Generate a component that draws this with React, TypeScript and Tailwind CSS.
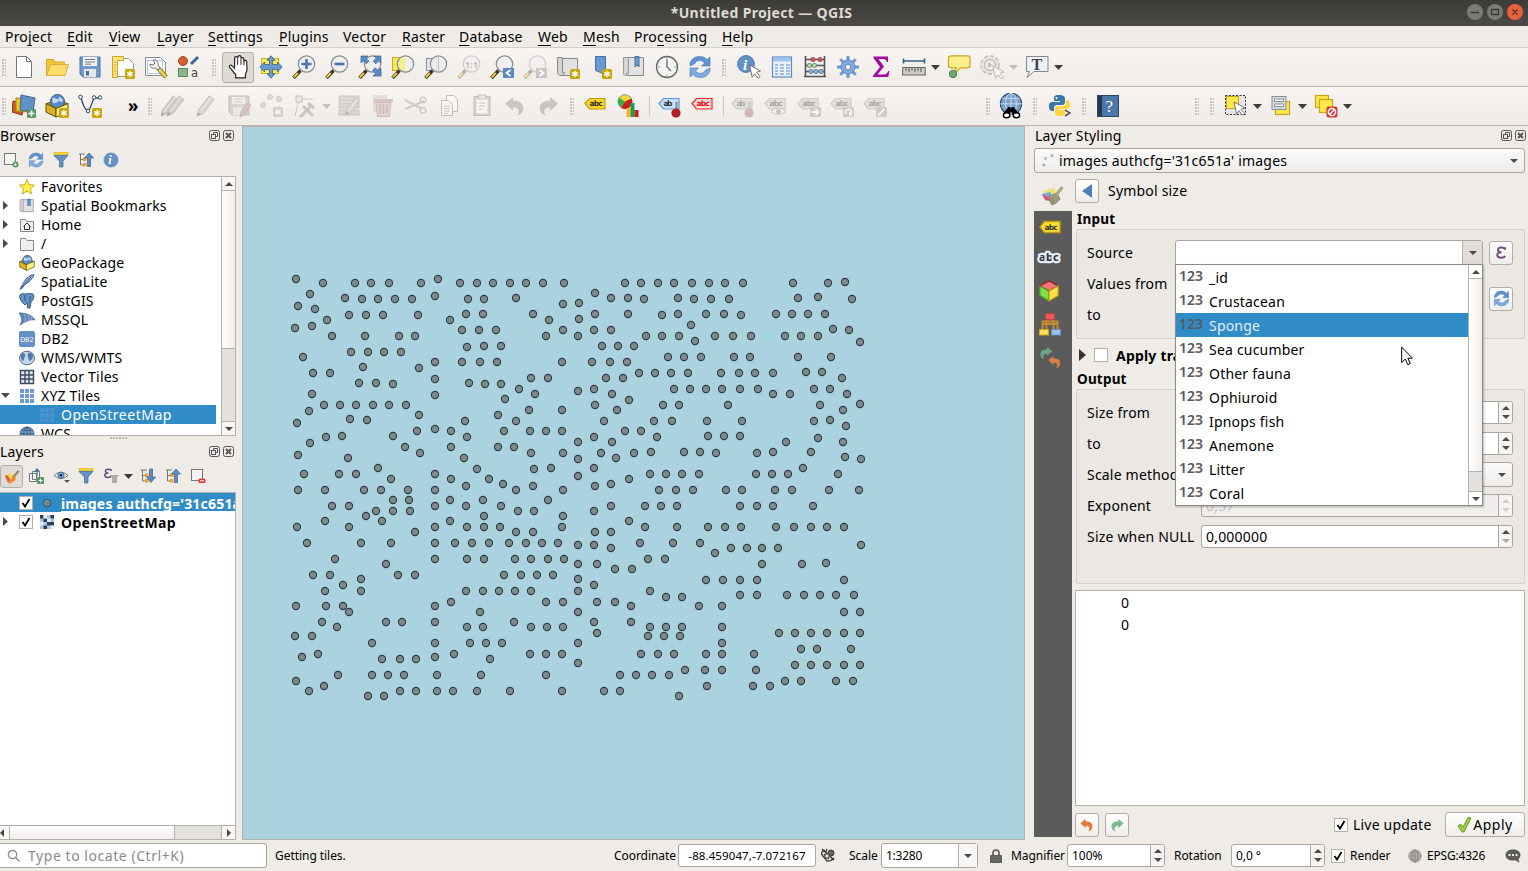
import React from "react";

/* ---------- map points: [y, ...x] ---------- */
const POINTS: number[][] = [
  [279, 296, 438], [283, 323, 355, 371, 389, 421, 460, 477, 493, 510, 526, 543, 564, 625, 641, 658, 674, 692, 709, 725, 743, 793, 828], [282, 845],
  [294, 310], [298, 345, 516, 611, 628, 678, 798], [299, 362, 378, 395, 412, 468, 484, 644, 694, 711, 729, 852], [296, 435], [304, 563], [303, 579], [293, 595], [297, 818],
  [306, 298], [309, 315], [320, 327, 450, 549], [315, 349, 366, 383, 418, 662, 741], [314, 466, 483, 533, 595, 628, 678, 706, 724, 776, 792, 808, 825], [319, 579],
  [325, 691], [328, 295], [326, 312], [336, 332, 365, 399, 415, 546, 578, 646, 662, 679, 715, 733, 751, 785, 801, 818], [330, 462, 479, 496, 563, 594, 611, 849], [329, 833],
  [341, 695], [342, 860], [347, 467], [346, 484, 501, 602, 618, 634], [357, 303, 668, 684, 701, 734, 750, 798, 831], [352, 351, 368, 384, 401], [367, 363], [368, 419],
  [362, 435, 462, 480, 497, 562, 592, 610, 627], [373, 313, 330, 639, 655, 671, 688, 721, 739, 755, 773], [372, 806, 822], [379, 435], [378, 531, 548, 606, 623, 842],
  [389, 519, 594, 674, 690, 706, 722, 740, 758, 814, 830], [383, 359, 376, 469], [384, 393, 485, 501], [391, 578], [394, 312, 535, 612, 773, 790, 847], [395, 435], [399, 505], [400, 629],
  [405, 324, 340, 356, 373, 389, 406, 595, 663, 679, 728, 820], [404, 860], [411, 309], [415, 419, 498], [410, 529, 562, 617, 843], [421, 465, 516, 604, 654, 672, 707, 742, 814],
  [420, 367, 830], [419, 350], [423, 297], [426, 846], [431, 417, 451, 504, 530, 546, 562, 625, 641], [429, 435], [437, 326, 467, 594, 657], [436, 342, 393, 708, 724, 740], [438, 818],
  [443, 310], [442, 578, 612, 786, 843], [447, 405, 451, 498, 514], [453, 420, 531, 563, 601, 634, 716, 757], [452, 651, 684, 700, 773, 811], [455, 298], [458, 348, 464, 616], [457, 845],
  [459, 578, 861], [469, 477, 534], [468, 378, 551, 594, 803], [474, 304, 339, 356, 435, 650, 666, 682, 699, 756, 772, 788, 838], [479, 391, 451, 489], [476, 578],
  [484, 503, 611], [479, 629], [490, 298, 325, 364, 381, 408, 516, 563, 659, 676, 693, 726, 829, 859], [486, 466, 533, 595],
  [490, 435, 742, 775, 792], [500, 393, 409, 450, 483, 548], [506, 332, 349, 435, 466, 501, 611, 645, 661, 677, 740, 757, 773, 813], [511, 376, 393, 410, 518, 534, 594], [516, 366, 484, 563],
  [527, 297, 349, 435, 467, 484, 500, 562, 645, 677, 708, 725, 741, 776, 794, 811, 827, 844], [521, 325, 382, 450, 629], [532, 415, 516, 533, 595, 611],
  [543, 307, 361, 391, 435, 455, 472, 489, 509, 526, 542, 558, 640], [545, 578, 594, 861], [548, 611, 731, 747, 762, 778], [553, 715], [543, 673, 700],
  [559, 335, 435, 467, 484, 515, 531, 548, 564, 648, 665], [564, 386, 578, 597, 762, 802], [563, 826], [569, 615, 632],
  [575, 313, 330, 398, 415, 504, 521, 537, 553], [579, 361, 578], [580, 706, 723, 740, 757, 844], [585, 343, 594], [591, 325, 466, 483, 499, 515, 531, 578, 650], [591, 361],
  [595, 787, 804, 820, 836, 854, 740, 757], [602, 451, 546, 563, 597, 615], [606, 296, 326, 343, 435, 631, 722], [612, 349, 480, 578, 844, 860], [597, 666, 682], [606, 699],
  [622, 322, 386, 402, 435, 514, 594, 631], [627, 337, 467, 483, 531, 547, 563, 650, 666, 682, 722], [636, 295, 312, 648, 664, 680], [633, 597, 779, 795, 811, 827, 844, 860],
  [643, 372, 435, 470, 486, 502, 578, 722], [649, 801, 817, 851], [654, 318, 454, 530, 546, 562, 641, 658, 674, 706, 722, 754], [657, 302, 435], [659, 382, 400, 416, 490], [663, 578],
  [665, 795, 811, 827, 844, 860], [670, 685, 705, 722, 756], [675, 338, 372, 388, 404, 437, 481, 546, 620, 636, 652, 669], [681, 296, 785, 801, 836, 853], [686, 324, 707, 753, 770],
  [691, 309, 400, 416, 437, 453, 477, 510, 562, 604, 620], [696, 368, 384, 679],
];

/* ---------- icons ---------- */
type Ico = { className?: string };
const S = ({ className = "h-6 w-6", vb = "0 0 24 24", children }: { className?: string; vb?: string; children: React.ReactNode }) => (
  <svg className={"shrink-0 " + className} viewBox={vb} fill="none">{children}</svg>
);
const Badge = ({ x = 14, y = 14, c = "#c8a60c" }) => (
  <g>
    <rect x={x} y={y} width="10" height="10" rx="1.5" fill={c} />
    <path d={`M${x + 5} ${y + 1.8}v6.4M${x + 2.2} ${y + 3.4}l5.6 3.2M${x + 7.8} ${y + 3.4}l-5.6 3.2`} stroke="#fff" strokeWidth="1.3" />
  </g>
);
const Cursor = ({ x = 12, y = 10 }) => (
  <path transform={`translate(${x} ${y})`} d="M0 0l11 6-4 1.2 3.6 4.4-2 1.6-3.6-4.5-2.3 3.5z" fill="#fff" stroke="#666" strokeWidth="0.9" />
);
const FileI = () => <S><path d="M4.500 1.500h10l5 5v16h-15z" fill="#fff" stroke="#777" /><path d="M14.500 1.500v5h5" stroke="#777" /></S>;
const FolderI = () => <S><path d="M1.500 20V4.500h7l2 2.500h9v4" fill="#f0c53a" stroke="#d8a832" /><path d="M1.500 20.500l4-11h18l-3.500 11z" fill="#fbdc6d" stroke="#dcae38" /></S>;
const SaveI = () => <S><path d="M2 2h20v20H5l-3-3z" fill="#6f9ad0" stroke="#4a6f9e" /><rect x="5" y="2" width="14" height="9" fill="#f4f4f4" /><path d="M7 4.500h10M7 7h10M7 9.200h6" stroke="#777" /><rect x="6" y="14" width="12" height="8" fill="#e5e8ea" /><rect x="8" y="16" width="3" height="4.500" fill="#4a6f9e" /></S>;
const LayoutI = () => <S><path d="M5.500 3.500h12l5 5v13h-17z" fill="#fff" stroke="#999" /><path d="M1.500 1.500h11v4h-6v17h-5z" fill="#fbe27d" stroke="#c9a51c" /><path d="M3 7h2M3 10h2M3 13h2M3 16h2M3 19h2" stroke="#c9a51c" /><Badge /></S>;
const LayoutMgrI = () => <S><path d="M1.500 2.500h15l5 5v13h-20z" fill="#fff" stroke="#888" /><rect x="3.500" y="5.500" width="15" height="13" stroke="#a8c8ee" /><path d="M14 13l8 9" stroke="#7d7223" strokeWidth="4.500" /><path d="M14 13l7.500 8.500" stroke="#f0cf54" strokeWidth="2.800" /><path d="M9 5l2 3-2 2-3-1c0 4 3 5 5 4l3 2 2-2-2-3c1-3-2-6-5-5z" fill="#eee" stroke="#666" strokeWidth=".9" /></S>;
const StyleMgrI = () => <S><circle cx="6" cy="6" r="4.500" fill="#d1622f" stroke="#a04a20" /><path d="M14 9l7-7" stroke="#3e689c" strokeWidth="3" /><rect x="1.500" y="13.500" width="9" height="8" fill="#8bb48b" stroke="#5b8a5b" /><text x="14" y="21.500" fontSize="11.500" fill="#444" fontFamily="DejaVu Sans">a</text></S>;
const HandI = () => <S className="h-[26px] w-[26px]"><path d="M8 22v-3L2.600 12.500c-1.300-1.800.8-3 2.200-1.500L7 13V4c0-2 2.500-2 2.700 0l.5-1.500c.6-1.600 2.600-1.200 2.700.3v1.300c.7-1.300 2.500-.8 2.700.6v1.600c.8-1 2.500-.4 2.600 1L18.500 15l-1.500 4v3z" fill="#fff" stroke="#222" strokeWidth="1.100" /><path d="M9.800 4.500V10M12.900 4.500V10M15.700 6.500V10.500" stroke="#222" strokeWidth=".9" /></S>;
const PanI = () => <S><rect x="2.500" y="3.500" width="17" height="15" fill="#fbe94f" stroke="#c8b52a" /><path d="M12 .8l4 4.500h-2.500v4.200h5V7l4.700 5-4.700 5v-2.500h-5v4.200H16l-4 4.500-4-4.500h2.500v-4.200h-5V17L.8 12l4.700-5v2.500h5V5.300H8z" fill="#6b9ad0" stroke="#39618f" strokeWidth=".8" /></S>;
const Glass = ({ children, dim }: { children?: React.ReactNode; dim?: boolean }) => (
  <g opacity={dim ? 0.35 : 1}>
    <path d="M8.500 15.500L1.500 23" stroke="#3a3420" strokeWidth="3.400" /><path d="M5.800 18L1.800 22.300" stroke="#f2cf3c" strokeWidth="1.900" />
    <circle cx="14.500" cy="9" r="8.200" fill="#eceeee" fillOpacity=".85" stroke="#8b8b8b" strokeWidth="1.200" />{children}
  </g>
);
const ZoomInI = () => <S><Glass><path d="M14.500 4v10M9.500 9h10" stroke="#4676b0" strokeWidth="2.600" /></Glass></S>;
const ZoomOutI = () => <S><Glass><path d="M9.500 9h10" stroke="#4676b0" strokeWidth="2.600" /></Glass></S>;
const ZoomFullI = () => <S><Glass /><path d="M3 8V1h7L7.800 3.200l3 3-2.600 2.600-3-3zM23 8V1h-7l2.200 2.200-3 3 2.600 2.600 3-3zM23 13v8h-8l2.500-2.500-3-3 2.700-2.700 3 3z" fill="#5b8bc4" stroke="#39618f" strokeWidth=".7" /></S>;
const ZoomSelI = () => <S><rect x="1.500" y="2.500" width="11" height="13" fill="#fbe94f" stroke="#c8a92a" /><Glass><path d="M14.500 2a7 7 0 0 0 0 14z" fill="#f7ec96" /></Glass></S>;
const ZoomLayerI = () => <S><rect x="2.500" y="3.500" width="10" height="12" fill="#e4e8ec" stroke="#8b9196" /><Glass><path d="M14.500 2v14" stroke="#bbb" /></Glass></S>;
const ZoomNativeI = () => <S><Glass dim><text x="8" y="12.500" fontSize="9" fontWeight="bold" fill="#555" fontFamily="Noto Sans">1:1</text></Glass></S>;
const ZoomLastI = () => <S><Glass /><rect x="13" y="13" width="11" height="10" fill="#5c88bd" /><path d="M20.500 15l-4 3 4 3" stroke="#fff" strokeWidth="1.800" /></S>;
const ZoomNextI = () => <S><Glass dim /><rect x="13" y="13" width="11" height="10" fill="#c9c7c5" /><path d="M16.500 15l4 3-4 3" stroke="#fff" strokeWidth="1.800" /></S>;
const MapViewI = () => <S><path d="M5.500 3.500h16v17h-16z" fill="#e2e2e2" stroke="#888" /><path d="M1.500 2.500h5v15h2c0 4-7 4-7 0z" fill="#d4d4d4" stroke="#888" /><Badge /></S>;
const BookmarkNewI = () => <S><path d="M6.500 1.500h10v20l-5-4-5-2z" fill="#6b9ad0" stroke="#466f9f" /><Badge x={13} /></S>;
const BookmarksI = ({ className }: Ico) => <S className={className}><path d="M4.500 2.500h17v18h-17z" fill="#e2e2e2" stroke="#888" /><path d="M1.500 2.500h5v16h-2c-1 3-3 2-3 0z" fill="#d4d4d4" stroke="#999" /><path d="M13 1.500h4V12l-2-2-2 2z" fill="#6b9ad0" stroke="#466f9f" /></S>;
const ClockI = () => <S><circle cx="12" cy="12" r="10.500" fill="#f3f4f4" stroke="#666" strokeWidth="1.300" /><path d="M12 5v7l4 4" stroke="#666" strokeWidth="1.300" /><path d="M12 3v2M12 19.500v2M3 12h2M19.500 12h2" stroke="#888" /></S>;
const RefreshI = ({ className }: Ico) => <S className={className}><path d="M2 11V8c2-4.500 5-6.500 9.500-6.500 3.500 0 5.500 1 7.500 3L22 2v9h-8.500l3-3C13 4 8 5.500 7 8.500z" fill="#5e93cf" stroke="#3f73b0" strokeWidth=".6" /><path d="M22 13v3c-2 4.500-5 6.500-9.500 6.500-3.500 0-5.500-1-7.500-3L2 22v-9h8.500l-3 3c3.500 4 8.500 2.500 9.500-.5z" fill="#7fabdc" stroke="#3f73b0" strokeWidth=".6" /></S>;
const InfoI = ({ className }: Ico) => <S className={className}><circle cx="12" cy="12" r="10.500" fill="#6391c6" stroke="#4f7db2" /><text x="8" y="18.500" fontSize="18" fontStyle="italic" fontWeight="bold" fill="#fff" fontFamily="Liberation Serif">i</text></S>;
const IdentifyI = () => <S><circle cx="9" cy="9" r="8.400" fill="#6391c6" stroke="#4f7db2" /><text x="6" y="14.500" fontSize="15" fontStyle="italic" fontWeight="bold" fill="#fff" fontFamily="Liberation Serif">i</text><Cursor x={12.500} y={10} /></S>;
const TableI = () => <S><rect x="2.500" y="2" width="19" height="20" fill="#e9f2fb" stroke="#5b8bc4" strokeWidth="1.200" /><rect x="3" y="2.500" width="18" height="4" fill="#9fc3ea" /><path d="M5 10h3M10 10h4M16 10h4M5 13h3M10 13h4M16 13h4M5 16h3M10 16h4M16 16h4M5 19h3M10 19h4M16 19h4" stroke="#5b8bc4" strokeWidth="1.200" /></S>;
const AbacusI = () => <S><path d="M2.500 1v20M21.500 1v20" stroke="#555" strokeWidth="1.600" /><path d="M2 4.500h20M2 10.500h20M2 16.500h20M1 21.500h22" stroke="#555" strokeWidth="1.400" /><g stroke="#555" strokeWidth=".6"><g fill="#e05050"><circle cx="10" cy="4.500" r="2.200" /><circle cx="17" cy="4.500" r="2.200" /></g><g fill="#9fe29f"><circle cx="6.500" cy="10.500" r="2.200" /><circle cx="11.500" cy="10.500" r="2.200" /></g><g fill="#7fb6e6"><circle cx="8" cy="16.500" r="2.200" /><circle cx="13" cy="16.500" r="2.200" /><circle cx="18" cy="16.500" r="2.200" /></g></g></S>;
const GearI = () => <S><g stroke="#6c97cf" strokeWidth="3"><path d="M12 1v22M1 12h22M4.300 4.300l15.400 15.400M19.700 4.300L4.300 19.700" /></g><circle cx="12" cy="12" r="7" fill="#85abdc" stroke="#5985bd" /><circle cx="12" cy="12" r="2.800" fill="#f3f1ee" stroke="#5985bd" /></S>;
const SigmaI = () => <S><path d="M4.500 1.500h14.500v5.500h-1.200c-.5-2-1.500-3-3.800-3H9.500l5.500 7.500-6.500 8h6c2.500 0 4-1 4.700-3.500h1.200L19.300 22H4v-1.300L11 12 4.500 3z" fill="#a00ca0" /></S>;
const RulerI = () => <S><path d="M1.500 6h21M1.500 3.500v5M22.500 3.500v5" stroke="#3e5f80" strokeWidth="1.600" /><rect x=".7" y="12.500" width="22.500" height="7.500" fill="#ccc" stroke="#666" /><path d="M4 13v3M7 13v4M10 13v3M13 13v4M16 13v3M19 13v4" stroke="#555" /></S>;
const TipI = () => <S><path d="M5 .8h15.500q2.500 0 2.500 2v8q0 2-2.500 2h-7l-6 5.700 1.500-5.700H5q-3.500 0-3.500-2v-8q0-2 3.500-2z" fill="#fdf08c" stroke="#c9a51c" strokeWidth="1.200" /><circle cx="6" cy="19" r="3.700" fill="#6fa86f" stroke="#4e7f4e" /></S>;
const ActionI = () => <S><g opacity=".4"><circle cx="10" cy="10" r="9" fill="#ddd" stroke="#888" strokeWidth="2" strokeDasharray="4 2" /><circle cx="10" cy="10" r="5.500" fill="#eee" stroke="#777" strokeWidth="1.500" /><path d="M8 7l5 3-5 3z" fill="#777" /><Cursor x={13} y={11} /></g></S>;
const TextAnnI = () => <S><path d="M1.500 1.500h21.500v15h-14l-7 6 2.500-6H1.500z" fill="#eaf2f7" stroke="#888" /><text x="6.500" y="14.500" fontSize="16" fontWeight="bold" fill="#444" fontFamily="Liberation Serif">T</text></S>;
const SrcMgrI = () => <S><path d="M1 7l12 2-3 12-10-3z" fill="#c8582b" stroke="#8c3b1b" /><path d="M4 4l13 1-1 13-12-1z" fill="#ecc926" stroke="#a88c10" /><path d="M9 1l14 3-2 14-13-2z" fill="#6391c6" stroke="#3d638f" /><rect x="15" y="15" width="9" height="9" rx="1" fill="#589a6a" /><path d="M19.500 16.500v6M16.500 19.500h6" stroke="#fff" strokeWidth="1.500" /></S>;
const GeoPkgI = ({ className, badge }: Ico & { badge?: boolean }) => <S className={className}><path d="M1 10l11-5 11 5-11 6z" fill="#b89a1f" stroke="#5e4e0a" /><circle cx="12.500" cy="7.500" r="7" fill="#5b8bc4" stroke="#37597f" /><path d="M7.500 4c3-1 3 2 5 1s2 2 0 3-3 2-5 0zM14 2.500l4 3-1 3-3-2z" fill="#c3dcf3" /><path d="M1 9.500l10 5v8.500L1 18z" fill="#dcb31e" stroke="#5e4e0a" /><path d="M11 14.500L23 9.500V18l-12 5z" fill="#fff07a" stroke="#5e4e0a" />{badge && <Badge />}</S>;
const ShapeI = () => <S><path d="M3 3.500c2 8 3 10 7 14 3-4 4-9 6-13.500h6" stroke="#2f4a66" strokeWidth="1.300" /><g fill="#fff" stroke="#2f4a66"><circle cx="2.500" cy="3" r="1.800" /><circle cx="10" cy="17" r="1.800" /><circle cx="16" cy="3.500" r="1.800" /><circle cx="22" cy="3.500" r="1.800" /></g><Badge /></S>;
const PencilShape = ({ t = "", f = "#bdb59a" }) => <g transform={t}><path d="M3 22l1.500-6L15 2l5 3.500L9 19.500z" fill={f} stroke="#777" /><path d="M6.500 17.500L17 3.500" stroke="#eee" /><path d="M3 22l1-3.500 2.500 1.500z" fill="#333" /></g>;
const EditsI = () => <S><PencilShape t="translate(-3 0)" f="#a39a90" /><PencilShape t="translate(3 0)" f="#b59a90" /></S>;
const PencilI = () => <S><PencilShape /></S>;
const SaveEditI = () => <S><path d="M2 2h20v19H5l-3-3z" fill="#aaa" stroke="#777" /><rect x="5" y="3" width="13" height="7" fill="#eee" /><path d="M7 5h9M7 8h9" stroke="#999" /><rect x="6" y="13" width="9" height="8" fill="#ddd" /><path d="M13 23l1-5 7-9 3 2-7 10z" fill="#c9806a" stroke="#866" /></S>;
const AddPtI = () => <S><g fill="#b9c0b9" stroke="#888"><circle cx="10" cy="3" r="2.500" /><circle cx="3" cy="11" r="2.500" /><circle cx="19" cy="5" r="2.500" /></g><Badge c="#aaa27a" x={13} y={13} /></S>;
const VertexI = () => <S><path d="M2 22L6 5h14" stroke="#888" /><rect x="3" y="2" width="6" height="6" fill="#ddd" stroke="#777" /><path d="M7 23l10-10M10 12l10 10M15 9l6 5" stroke="#8b8878" strokeWidth="3" /></S>;
const MultiEditI = () => <S><g fill="#b9b59e" stroke="#888"><rect x="1" y="2" width="20" height="5" /><rect x="1" y="9" width="20" height="5" /><rect x="1" y="16" width="20" height="5" /></g><PencilShape t="translate(5 2) scale(.85)" /></S>;
const TrashI = () => <S><rect x="2" y="1" width="14" height="17" fill="#c9c5a8" /><path d="M3 5h19v3H3z" fill="#b87f7f" /><path d="M5 8.500h15l-1.500 14h-12z" fill="#d9abab" stroke="#a66" /><path d="M9 10v10M12.500 10v10M16 10v10" stroke="#a66" strokeWidth="1.500" /></S>;
const CutI = () => <S><path d="M1 6l17 9M1 15L20 7" stroke="#999" strokeWidth="2" /><circle cx="19" cy="6" r="2.800" stroke="#999" strokeWidth="1.500" /><circle cx="19" cy="16.500" r="2.800" stroke="#999" strokeWidth="1.500" /></S>;
const CopyI = () => <S><path d="M9.500 1.500h7l4 4v12h-11z" fill="#fff" stroke="#777" /><path d="M4.500 6.500h7l4 4v11h-11z" fill="#fff" stroke="#777" /><path d="M7 12h6M7 14.500h6M7 17h6M7 19.500h4" stroke="#888" /></S>;
const PasteI = () => <S><rect x="4" y="2.500" width="16" height="19" fill="#aaa" stroke="#777" /><rect x="6.500" y="5" width="11" height="14.500" fill="#fff" /><rect x="8.500" y="1" width="7" height="4" fill="#ddd" stroke="#777" /><path d="M8.500 9h7M8.500 12h7M8.500 15h5" stroke="#888" /></S>;
const UndoShape = ({ c = "#888" }) => <path d="M2 9.500L10 3v4c8-1 11 4 10 9-.6 3-3 5-6 5.500 3-4 2-8-4-8V17z" fill={c} />;
const UndoI = ({ className, c }: Ico & { c?: string }) => <S className={className}><UndoShape c={c} /></S>;
const RedoI = ({ className, c }: Ico & { c?: string }) => <S className={className}><g transform="matrix(-1 0 0 1 24 0)"><UndoShape c={c} /></g></S>;
const Tag = ({ f = "#f7d926", s = "#bf9c0e", t = "abc", tc = "#333", children }: { f?: string; s?: string; t?: string; tc?: string; children?: React.ReactNode }) => (
  <S><path d="M1 9.500L5.500 4.500H21v10.500H5.500z" fill={f} stroke={s} strokeWidth="1.200" /><text x="5.500" y="12.300" fontSize="7.500" fontWeight="bold" fill={tc} fontFamily="DejaVu Sans" textLength={t.length > 2 ? 13.500 : 9}>{t}</text>{children}</S>
);
const Pin = ({ c = "#b01f24" }) => <g><path d="M18.500 8v8" stroke="#888" strokeWidth="2" /><circle cx="18" cy="19" r="4.600" fill={c} /></g>;
const DiagramI = () => <S><circle cx="8" cy="7.500" r="6.800" fill="#fbd93b" stroke="#555" strokeWidth=".6" /><path d="M8 7.500L2 3.500a7 7 0 0 0 2 10z" fill="#2eb04a" /><path d="M8 7.500L4 13.800a7 7 0 0 0 10-2z" fill="#c81d1d" /><path d="M8 7.500l6.500-3a7 7 0 0 1-.5 7.300z" fill="#c81d1d" /><rect x="9.500" y="14" width="4" height="9" fill="#fbb42a" /><rect x="13.500" y="9" width="4" height="14" fill="#18a050" /><rect x="17.500" y="16" width="4" height="7" fill="#c81d1d" /></S>;
const MiniBox = ({ d }: { d: string }) => <g><rect x="13" y="13" width="11" height="10" rx="1" fill="#999" /><path d={d} stroke="#fff" strokeWidth="1.800" /></g>;
const EyeShape = () => <g><path d="M7 17.500q7-7 15 0q-8 6-15 0z" fill="#fff" stroke="#888" /><circle cx="14.500" cy="17.500" r="2.500" fill="#888" /></g>;
const GlobeI = ({ className, c = "#6f9ccb", l = "#2c4767" }: Ico & { c?: string; l?: string }) => <S className={className}><circle cx="12" cy="12" r="10.500" fill={c} stroke={l} strokeWidth="1.200" /><path d="M12 1.500v21M1.500 12h21M3.500 6.500h17M3.500 17.500h17" stroke={l} strokeWidth=".9" /><ellipse cx="12" cy="12" rx="5" ry="10.500" stroke={l} strokeWidth=".9" /></S>;
const MetaI = () => <S className="h-[26px] w-[26px]"><circle cx="12" cy="10" r="9.800" fill="#7ba0ca" stroke="#2c4767" /><path d="M12 0v20M2 10h20M4 5h16" stroke="#cfe0f2" strokeWidth=".8" /><ellipse cx="12" cy="10" rx="5" ry="9.800" stroke="#cfe0f2" strokeWidth=".8" /><path d="M5.500 18l4-5h1.500l1 1 1-1h1.500l4 5v2h-5.500v-2h-2v2H5.500z" fill="#000" /><ellipse cx="8" cy="20.500" rx="3" ry="2.300" fill="#fff" stroke="#000" strokeWidth="1.300" /><ellipse cx="17" cy="20.500" rx="3" ry="2.300" fill="#fff" stroke="#000" strokeWidth="1.300" /></S>;
const PythonI = () => <S><path d="M11 1c-5 0-5 2-5 4v2h6v1H4C1 8 1 11 1 12s0 5 3 5h2v-3c0-2 1.500-3 3-3h5c2 0 3-1 3-3V5c0-3-2-4-6-4z" fill="#3b77a8" /><circle cx="8.500" cy="4" r="1" fill="#fff" /><path d="M12 22c5 0 5-2 5-4v-2h-6v-1h8c3 0 3-3 3-4s0-5-3-5h-1v3c0 2-1.500 3-3 3h-5c-2 0-3 1-3 3v4c0 2 1 3 5 3z" fill="#ffd640" /><path d="M17 16l5 3-5 3" stroke="#555" strokeWidth="1.500" /></S>;
const HelpI = () => <S><rect x="1.500" y="1.500" width="21" height="21" fill="#4b78ab" stroke="#2d4561" /><rect x="2" y="2" width="4" height="20" fill="#24384f" /><text x="9.500" y="18" fontSize="17" fill="#fff" fontFamily="Liberation Serif">?</text></S>;
const SelectI = () => <S><rect x="1.500" y="1.500" width="20" height="19" fill="#e4e6ea" stroke="#333" strokeDasharray="2 1.500" /><rect x="2.500" y="2.500" width="12" height="12" fill="#fde74c" stroke="#c9a51c" /><Cursor x={10} y={8} /></S>;
const SelFormI = () => <S><rect x="6.500" y="7.500" width="14" height="13" fill="#fde74c" stroke="#c9a51c" strokeWidth="1.200" /><rect x="3" y="2.500" width="14" height="13" fill="#d5dae0" stroke="#888e94" /><path d="M5.500 5h9v2.500h-9zM5.500 10h9v2.500h-9z" fill="#fff" stroke="#888e94" /></S>;
const DeselI = () => <S><rect x="1.500" y="1.500" width="13" height="12" fill="#fde74c" stroke="#c9a51c" strokeWidth="1.200" /><rect x="5.500" y="5.500" width="13" height="13" fill="#fde74c" stroke="#c9a51c" strokeWidth="1.200" /><rect x="12.500" y="12.500" width="11" height="11" rx="2" fill="#d93838" /><circle cx="18" cy="18" r="3.600" stroke="#fff" strokeWidth="1.500" /><path d="M15.500 20.500l5-5" stroke="#fff" strokeWidth="1.500" /></S>;

const I16 = "h-4 w-4";
const StarI = () => <S className={I16}><path d="M12 1l3.200 7.500 8 .7-6 5.300 1.800 8L12 18.300 5 22.500l1.800-8-6-5.300 8-.7z" fill="#fdf04a" stroke="#c8ae1e" strokeWidth="1.500" /></S>;
const DirI = ({ home }: { home?: boolean }) => <S className={I16} vb="0 0 16 16"><path d="M1.500 14.500v-12h5l1.500 2h6.500v10z" fill="#eee" stroke="#888" />{home && <path d="M4.500 9.500L8 6l3.500 3.500M5.500 9v3.500h5V9" stroke="#333" />}</S>;
const FeatherI = () => <S className={I16} vb="0 0 16 16"><path d="M1 15L5 8c2-4 6-7 10-7.500C14 4 10 9 6 10.500L2.500 15z" fill="#86abd6" stroke="#3f6590" /><path d="M2 14L12 3" stroke="#3f6590" /></S>;
const PostgisI = () => <S className={I16} vb="0 0 16 16"><path d="M1 2c2-2 4-1 5-1s5-1 8 0c2 2 0 7-2 8l-1 6H8.500V10L6 12 3 9C1 6 0 4 1 2z" fill="#6391c6" stroke="#37597f" /><path d="M6 2c-1 3 0 5 1 6M11 3v6" stroke="#37597f" /></S>;
const MssqlI = () => <S className={I16} vb="0 0 16 16"><path d="M0 1c7 0 13 2 16 7-4-1-9 1-15 5 3-4 2-8-1-12z" fill="#5b84b8" stroke="#3f6590" strokeWidth=".8" /><path d="M5 2c2 3 2 6 0 9M9 3c1.500 2 1.500 4 0 6.500M12 4.500c1 1 1 2 0 3.500" stroke="#b9cfe8" strokeWidth=".7" /></S>;
const Db2I = () => <S className={I16} vb="0 0 16 16"><rect width="16" height="16" rx="2" fill="#6391c6" /><text x="1.200" y="10.500" fontSize="6.500" fill="#fff" fontFamily="DejaVu Sans" textLength="13.600">DB2</text></S>;
const WmsI = () => <S className={I16} vb="0 0 16 16"><ellipse cx="8" cy="8" rx="7.500" ry="6.800" fill="#c3d5e8" stroke="#4d6e93" /><path d="M2 4c3-2 5 0 4 2s-1 5-2 5-3-4-2-7zM9 3c3-1 5 1 5 3s-2 5-3 5-3-6-2-8z" fill="#4d78a8" /></S>;
const VTileI = () => <S className={I16} vb="0 0 16 16"><rect x="1" y="1" width="14" height="14" fill="#dfe8f2" /><path d="M1.500 6h13M1.500 10h13M6 1.500v13M10 1.500v13M1.500 1.500h13v13h-13z" stroke="#3c4a5a" strokeWidth="1.400" /></S>;
const XyzI = ({ f = "#6d9cd4" }) => <S className={I16} vb="0 0 16 16"><path d="M1 1h4v4H1zM6 1h4v4H6zM11 1h4v4h-4zM1 6h4v4H1zM6 6h4v4H6zM11 6h4v4h-4zM1 11h4v4H1zM6 11h4v4H6zM11 11h4v4h-4z" fill={f} /></S>;
const AddLayerI = () => <S className={I16} vb="0 0 16 16"><rect x="1.500" y="1.500" width="11" height="11" fill="#f4f4f2" stroke="#777" /><circle cx="12.500" cy="12.500" r="3" fill="#5a9a5a" /><path d="M12.500 11v3M11 12.500h3" stroke="#fff" /></S>;
const RemoveLayerI = () => <S className={I16} vb="0 0 16 16"><rect x="1.500" y="1.500" width="11" height="11" fill="#f4f4f2" stroke="#777" /><rect x="8.500" y="10.500" width="7" height="4.500" rx="1.500" fill="#dd3b3b" /><path d="M10 12.800h4" stroke="#fff" /></S>;
const FunnelI = () => <S className={I16} vb="0 0 16 16"><rect x="1" y="0" width="14" height="3" rx="1" fill="#f3d73c" stroke="#b89a1f" strokeWidth=".5" /><path d="M1 3.500h14L10 9v6H6.500V9z" fill="#6391c6" stroke="#3f6590" strokeWidth=".7" /></S>;
const TreeArrowI = ({ down }: { down?: boolean }) => <S className={I16} vb="0 0 16 16"><path d="M1 2h6M2.500 2v11h4M2.500 7.500h4" stroke="#777" /><rect x="5" y="5.500" width="3.500" height="3.500" fill="#f0a030" /><rect x="5" y="11" width="3.500" height="3.500" fill="#f0a030" /><path d={down ? "M9.500 1h3v8h3L11 14.500 6.500 9h3z" : "M9.500 14.500h3V6h3L11 1 6.500 6h3z"} fill="#5b8bc4" stroke="#39618f" strokeWidth=".7" /></S>;
const BrushI = () => <S className={I16} vb="0 0 20 20"><path d="M1 9l8-3 4 8-7 4z" fill="#f5dc5a" /><path d="M1 10l4-1 4 8-4 1z" fill="#e2574c" /><path d="M4 17c4-1 6-4 7-8l4 4c-2 4-6 6-9 6z" fill="#f08a30" /><path d="M12 11l6.500-7.500" stroke="#9b8a5c" strokeWidth="2.800" /></S>;
const SymbologyI = () => <S className="h-[22px] w-[24px]" vb="0 0 24 22"><path d="M3 7l11-3 4 9-8 5z" fill="#e8e27c" /><path d="M2 10l8-2 3 6-7 3z" fill="#7fa8d8" /><path d="M2 10l3 6 6 1-3-4z" fill="#d9566a" /><path d="M9 12l8-3 3 6c-2 3-5 5-8 6z" fill="#9b9b80" stroke="#77775e" strokeWidth=".7" /><path d="M16 11l6.500-8" stroke="#a9a384" strokeWidth="3" /><path d="M11 20l-2-5M14 19l-2-5" stroke="#77775e" strokeWidth=".7" /></S>;
const GroupI = () => <S className={I16} vb="0 0 16 16"><path d="M1.500 5.500h7v8h-7zM4.500 3.500h7v8h-7z" fill="#f4f4f2" stroke="#777" /><path d="M9 1v7M7 3.500L9 1l2 2.500" stroke="#4676b0" strokeWidth="1.300" /><rect x="9" y="9" width="7" height="7" rx="1" fill="#5a9a6a" /><path d="M12.500 10.500v4M10.500 12.500h4" stroke="#fff" /></S>;
const EyeI = () => <S className="h-4 w-[18px]" vb="0 0 18 16"><path d="M1 7.500Q8 1 15 7.500Q8 13.500 1 7.500z" fill="#fff" stroke="#777" /><circle cx="8" cy="7.300" r="3.200" fill="#7da6d3" stroke="#4a6f9e" /><circle cx="8" cy="7.300" r="1.200" fill="#223" /><path d="M11 12h6l-3 3z" fill="#555" /></S>;
const EpsShape = () => <path d="M10 2.800C8.500 1 3.500.8 3 3.500c-.3 1.800 1.500 2.700 3.500 2.700-2.800 0-4.500 1.200-4.300 3C2.700 12.500 8.500 12.500 10.300 10M10 1.200v2.500" stroke="#6b4c7c" strokeWidth="1.900" />;
const EpsFilterI = () => <S className={I16} vb="0 0 16 16"><g transform="scale(.8)"><EpsShape /></g><path d="M7 7h9l-2 3v5h-5v-5z" fill="#aaa" /></S>;
const CheckerI = () => <S className="h-[14px] w-[14px]" vb="0 0 12 12"><rect width="12" height="12" fill="#a9c5e6" /><path d="M0 0h3v3H0zM3 3h3v3H3zM9 0h3v3H9zM6 6h3v3H6zM3 9h3v3H3zM9 6h3v3H9z" fill="#2e3d50" /><path d="M3 0h3v3H3zM0 6h3v3H0zM9 9h3v3H9zM6 3h3v3H6z" fill="#e6edf5" /></S>;
const CubeI = () => <S className="h-[22px] w-[22px]"><path d="M12 1l10 5.500L12 12 2 6.500z" fill="#f07878" stroke="#b01818" strokeWidth="1.300" /><path d="M2 6.500L12 12v11L2 17z" fill="#7fe04a" stroke="#4a9a20" strokeWidth="1.300" /><path d="M22 6.500L12 12v11l10-6z" fill="#ffe24a" stroke="#b89a1f" strokeWidth="1.300" /></S>;
const RulesI = () => <S className="h-6 w-6"><path d="M8.500 6v10M15.500 6v10M4.500 17V9.500h15V17M4 12h16M8.500 16v1M15.500 16v1" stroke="#c98a30" strokeWidth="2" /><rect x="7.500" y="1.500" width="9" height="6" fill="#ea5a5a" stroke="#c03a3a" /><rect x="1.500" y="17.500" width="9" height="5.500" fill="#fbe05a" stroke="#c9a51c" /><rect x="13.500" y="17.500" width="9" height="5.500" fill="#9cc3f0" stroke="#6391c6" /></S>;
const HistoryI = () => <S className="h-6 w-6"><g transform="translate(15.500 0) scale(-.65 .65)"><UndoShape c="#6fa386" /></g><g transform="translate(9 9) scale(.65)"><UndoShape c="#dd7f45" /></g></S>;
const ColorTagI = () => <S className="h-6 w-6"><path d="M2 12l4.500-5.500H22v11H6.500z" fill="#fbdf35" stroke="#bf9c0e" strokeWidth="1.400" /><text x="6.500" y="15" fontSize="7.500" fontWeight="bold" fill="#333" fontFamily="DejaVu Sans" textLength="13.500">abc</text></S>;
const HaloI = () => <S className="h-4 w-6" vb="0 0 24 16"><text x="2" y="12" fontSize="11" fontWeight="bold" fill="#333" stroke="#e4ecf8" strokeWidth="4.500" strokeLinejoin="round" paintOrder="stroke" fontFamily="Noto Sans" textLength="20">abc</text></S>;

/* ---------- small controls ---------- */
const Tri = ({ d = "down", className = "", w = 9, h = 5 }: { d?: string; className?: string; w?: number; h?: number }) => (
  <svg className={"shrink-0 " + className} width={d === "left" || d === "right" ? h : w} height={d === "left" || d === "right" ? w : h} viewBox="0 0 10 10" preserveAspectRatio="none">
    <path d={d === "down" ? "M0 0h10L5 10z" : d === "up" ? "M0 10h10L5 0z" : d === "left" ? "M10 0v10L0 5z" : "M0 0v10l10-5z"} fill="currentColor" />
  </svg>
);
const Slot = ({ children, dim }: { children: React.ReactNode; dim?: boolean }) => (
  <div className={"flex h-[30px] w-[33px] shrink-0 items-center justify-center " + (dim ? "opacity-40 grayscale-[40%]" : "")}>{children}</div>
);
const Drop = ({ dim }: { dim?: boolean }) => <div className={"-ml-px mr-px flex w-3 shrink-0 justify-center " + (dim ? "text-[#c3c0bd]" : "text-[#3c3c3c]")}><Tri /></div>;
const Grip = ({ w }: { w: string }) => (
  <div className={"flex shrink-0 justify-center " + w}>
    <div className="h-[17px] w-1 bg-[radial-gradient(circle_at_1px_1px,#c6c2be_0.7px,transparent_1px)] bg-[size:3px_3px]" />
  </div>
);
const Check = ({ on, className = "" }: { on?: boolean; className?: string }) => (
  <span className={"flex h-[14px] w-[14px] shrink-0 items-center justify-center border border-[#b4b1ad] bg-white " + className}>
    {on && <svg className="h-[10px] w-[10px]" viewBox="0 0 10 10" fill="none"><path d="M1.500 5l2.500 3.500L8.500 1" stroke="#000" strokeWidth="1.800" /></svg>}
  </span>
);
const DockTitle = ({ t, className = "" }: { t: string; className?: string }) => (
  <div className={"flex h-5 shrink-0 items-center pb-px " + className}>
    <span className="flex-1 pb-px">{t}</span>
    <svg className="mr-[3px] h-[11px] w-[11px]" viewBox="0 0 11 11" fill="none" stroke="#555"><rect x=".5" y=".5" width="10" height="10" rx="2" /><rect x="2.500" y="4.500" width="4" height="4" /><path d="M4.500 4.500v-2h4v4h-2" /></svg>
    <svg className="h-[11px] w-[11px]" viewBox="0 0 11 11" fill="none" stroke="#555"><rect x=".5" y=".5" width="10" height="10" rx="2" /><path d="M3 3l5 5M8 3L3 8" strokeWidth="1.900" /></svg>
  </div>
);
const Spin = ({ v, className = "", dim, downDim }: { v: string; className?: string; dim?: boolean; downDim?: boolean }) => (
  <div className={"flex h-[23px] overflow-hidden rounded-[3px] border border-[#a9a5a0] " + (dim ? "bg-[#f0eeea] text-[#c4c1bd] " : "bg-white ") + className}>
    <span className="flex flex-1 items-center pl-1">{v}</span>
    <span className={"flex w-[14px] flex-col items-center justify-center gap-[5px] border-l border-[#a9a5a0] bg-[#f7f5f3] " + (dim ? "text-[#d2cfcb]" : "text-[#4a4a4a]")}>
      <Tri d="up" w={8} h={4} /><Tri w={8} h={4} className={downDim ? "text-[#aaa]" : ""} />
    </span>
  </div>
);

const MENU: [string, string, string, string][] = [
  ["Pro", "j", "ect", "w-[62px]"], ["", "E", "dit", "w-[42px]"], ["", "V", "iew", "w-[48px]"], ["", "L", "ayer", "w-[51px]"], ["", "S", "ettings", "w-[71px]"],
  ["", "P", "lugins", "w-[64px]"], ["Vect", "o", "r", "w-[59px]"], ["", "R", "aster", "w-[57px]"], ["", "D", "atabase", "w-[79px]"], ["", "W", "eb", "w-[45px]"],
  ["", "M", "esh", "w-[51px]"], ["Pro", "c", "essing", "w-[88px]"], ["", "H", "elp", "w-[40px]"],
];
const BROWSER: [string, string, React.ReactNode][] = [
  ["", "Favorites", <StarI />], ["right", "Spatial Bookmarks", <BookmarksI className={I16} />], ["right", "Home", <DirI home />], ["right", "/", <DirI />],
  ["", "GeoPackage", <GeoPkgI className={I16} />], ["", "SpatiaLite", <FeatherI />], ["", "PostGIS", <PostgisI />], ["", "MSSQL", <MssqlI />], ["", "DB2", <Db2I />],
  ["", "WMS/WMTS", <WmsI />], ["", "Vector Tiles", <VTileI />], ["down", "XYZ Tiles", <XyzI />],
];
const FIELDS = ["_id", "Crustacean", "Sponge", "Sea cucumber", "Other fauna", "Ophiuroid", "Ipnops fish", "Anemone", "Litter", "Coral"];
const BTN = "flex h-6 w-6 shrink-0 items-center justify-center rounded-[3px] border border-[#b0aca7] bg-linear-to-b from-white to-[#efedea]";

export default function App() {
  return (
    <div className="flex h-[871px] w-[1528px] flex-col overflow-hidden bg-[#efebe7] font-['Noto_Sans',sans-serif] text-[14px] leading-[19px] tracking-[0.2px] text-black">
      {/* window title */}
      <div className="flex h-[26px] shrink-0 items-center bg-linear-to-b from-[#3c3b37] to-[#4b4a45] pr-[5px]">
        <span className="w-[1467px] pb-[2px] pl-[56px] text-center text-[14px] font-bold tracking-[0.33px] text-[#dfdbd2]">*Untitled Project — QGIS</span>
        <svg className="h-[18px] w-[56px]" viewBox="0 0 56 18" fill="none">
          <circle cx="8" cy="8" r="8" fill="#7b7a75" /><circle cx="28" cy="8" r="8" fill="#7b7a75" /><circle cx="48" cy="8" r="8" fill="#e9603a" />
          <path d="M4 8.500h8M24.500 5.500h7v5h-7zM45.500 5.500l5 5M50.500 5.500l-5 5" stroke="#3a3935" strokeWidth="1.300" />
        </svg>
      </div>
      {/* menu bar */}
      <div className="flex h-[22px] shrink-0 items-center border-b border-[#d2cecb] pl-[5px]">
        {MENU.map(([a, u, b, w]) => (
          <span key={a + u + b} className={"shrink-0 whitespace-nowrap " + w}>{a}<span className="underline decoration-1 underline-offset-[3px] [text-decoration-skip-ink:none]">{u}</span>{b}</span>
        ))}
      </div>
      {/* toolbar, project and navigation */}
      <div className="flex h-[39px] shrink-0 items-center border-b border-[#b8b4b0] bg-linear-to-b from-[#f8f5f2] to-[#efebe7]">
        <Grip w="w-[7px]" />
        <Slot><FileI /></Slot><Slot><FolderI /></Slot><Slot><SaveI /></Slot><Slot><LayoutI /></Slot><Slot><LayoutMgrI /></Slot><Slot><StyleMgrI /></Slot>
        <Grip w="w-[17px]" />
        <div className="flex h-[31px] w-8 shrink-0 items-center justify-center rounded-[3px] border border-[#b0aca8] bg-[#dedad6] pl-[3px]"><HandI /></div>
        <Slot><PanI /></Slot><Slot><ZoomInI /></Slot><Slot><ZoomOutI /></Slot><Slot><ZoomFullI /></Slot><Slot><ZoomSelI /></Slot><Slot><ZoomLayerI /></Slot><Slot><ZoomNativeI /></Slot>
        <Slot><ZoomLastI /></Slot><Slot><ZoomNextI /></Slot><Slot><MapViewI /></Slot><Slot><BookmarkNewI /></Slot><Slot><BookmarksI /></Slot><Slot><ClockI /></Slot><Slot><RefreshI /></Slot>
        <Grip w="w-4" />
        <Slot><IdentifyI /></Slot><Slot><TableI /></Slot><Slot><AbacusI /></Slot><Slot><GearI /></Slot><Slot><SigmaI /></Slot><Slot><RulerI /></Slot><Drop />
        <Slot><TipI /></Slot><Slot><ActionI /></Slot><Drop dim /><Slot><TextAnnI /></Slot><Drop />
      </div>
      {/* toolbar, layers and editing */}
      <div className="flex h-[39px] shrink-0 items-center border-b border-[#b8b4b0] bg-linear-to-b from-[#f8f5f2] to-[#efebe7]">
        <Grip w="w-[7px]" />
        <Slot><SrcMgrI /></Slot><Slot><GeoPkgI badge /></Slot><Slot><ShapeI /></Slot>
        <span className="w-[38px] pb-[2px] pl-[22px] text-[17px] font-bold">»</span><Grip w="w-3" />
        <Slot dim><EditsI /></Slot><Slot dim><PencilI /></Slot><Slot dim><SaveEditI /></Slot><Slot dim><AddPtI /></Slot><Slot dim><VertexI /></Slot><Drop dim />
        <Slot dim><MultiEditI /></Slot><Slot dim><TrashI /></Slot><Slot dim><CutI /></Slot><Slot dim><CopyI /></Slot><Slot dim><PasteI /></Slot><Slot dim><UndoI /></Slot><Slot dim><RedoI /></Slot>
        <Grip w="w-[15px]" />
        <Slot><Tag /></Slot><Slot><DiagramI /></Slot>
        <div className="mr-[3px] ml-1 h-5 w-px shrink-0 bg-[#cbc7c3]" />
        <Slot><Tag f="#c5dff9" s="#5a9be0" t="ab"><Pin /></Tag></Slot><Slot><Tag f="#fdd" s="#f22" tc="#e01010" /></Slot>
        <div className="mr-[2px] ml-1 h-5 w-px shrink-0 bg-[#cbc7c3]" />
        <Slot dim><Tag f="#ccc7b0" s="#999" t="ab"><Pin c="#a66" /></Tag></Slot><Slot dim><Tag f="#ccc7b0" s="#999"><EyeShape /></Tag></Slot>
        <Slot dim><Tag f="#ccc7b0" s="#999"><MiniBox d="M14.500 18h7M18.500 15l3 3-3 3" /></Tag></Slot><Slot dim><Tag f="#ccc7b0" s="#999"><MiniBox d="M16 20a3 3 0 1 1 4 1v-3" /></Tag></Slot>
        <Slot dim><Tag f="#ccc7b0" s="#999"><MiniBox d="M15 21.500l6.500-6.500" /></Tag></Slot>
        <div className="w-[90px] shrink-0" />
        <Grip w="w-[14px]" /><div className="-ml-px"><Slot><MetaI /></Slot></div><Grip w="w-4" /><Slot><PythonI /></Slot><Grip w="w-[15px]" /><Slot><HelpI /></Slot>
        <div className="w-[64px] shrink-0" /><Grip w="w-[17px]" /><Grip w="w-[14px]" />
        <Slot><SelectI /></Slot><Drop /><Slot><SelFormI /></Slot><Drop /><Slot><DeselI /></Slot><Drop />
      </div>

      {/* docks and map */}
      <div className="flex h-[714px] shrink-0">
        <div className="flex w-[236px] shrink-0 flex-col">
          <DockTitle t="Browser" className="pr-[2px]" />
          <div className="flex h-[30px] shrink-0 items-center gap-[9px] pb-[2px] pl-[3px]">
            <AddLayerI /><RefreshI className={I16} /><FunnelI /><TreeArrowI /><InfoI className={I16} />
          </div>
          <div className="flex h-[260px] shrink-0 border border-l-0 border-[#b4b0ac] bg-white">
            <div className="w-[221px] overflow-hidden">
              {BROWSER.map(([a, t, icon]) => (
                <div key={t} className="flex h-[19px] items-center">
                  <span className="flex w-[19px] pl-px text-[#4a4a4a]">{a && <Tri d={a} w={9} h={5} className={a === "right" ? "ml-[2px]" : ""} />}</span>
                  {icon}<span className="pl-[6px]">{t}</span>
                </div>
              ))}
              <div className="flex h-[19px] w-[216px] items-center bg-[#308cc6] pl-[39px] text-white"><XyzI f="#4d92cf" /><span className="pl-[6px] tracking-[0.5px]">OpenStreetMap</span></div>
              <div className="flex h-[19px] items-center pl-[19px]"><GlobeI className={I16} /><span className="pl-[6px]">WCS</span></div>
            </div>
            <div className="flex flex-1 flex-col border-l border-[#b4b0ac] bg-[#e3e1de] text-[#4a4a4a]">
              <div className="flex h-[14px] items-center justify-center border-b border-[#b4b0ac] bg-[#f8f7f5]"><Tri d="up" w={8} h={4} /></div>
              <div className="h-[158px] border-b border-[#b4b0ac] bg-linear-to-r from-white to-[#f0eeec]" />
              <div className="flex-1" />
              <div className="flex h-[14px] items-center justify-center border-t border-[#b4b0ac] bg-[#f8f7f5]"><Tri w={8} h={4} /></div>
            </div>
          </div>
          <div className="flex h-[6px] shrink-0 justify-center pt-px"><div className="h-[2px] w-[17px] bg-[radial-gradient(circle_at_1px_1px,#b9b5b1_0.7px,transparent_1px)] bg-[size:3px_3px]" /></div>
          <DockTitle t="Layers" className="pr-[2px]" />
          <div className="flex h-[30px] shrink-0 items-center pb-[2px]">
            <div className="flex h-[23px] w-[23px] items-center justify-center rounded-[3px] border border-[#b0aca8] bg-[#dedad6]"><BrushI /></div>
            <div className="flex items-center gap-[9px] pl-[5px]"><GroupI /><EyeI /><span className="-ml-[2px]"><FunnelI /></span><EpsFilterI /></div>
            <Tri className="ml-[5px] text-[#3c3c3c]" />
            <div className="flex items-center gap-[9px] pl-[7px]"><TreeArrowI down /><TreeArrowI /><RemoveLayerI /></div>
          </div>
          <div className="flex h-[348px] shrink-0 flex-col overflow-hidden border border-l-0 border-[#b4b0ac] bg-white font-bold">
            <div className="flex h-[19px] shrink-0 items-center bg-[#308cc6] pl-[19px] text-white">
              <Check on /><svg className="ml-[9px] h-[10px] w-[10px]" viewBox="0 0 10 10"><circle cx="5" cy="5" r="4" fill="#6c8b99" stroke="#34505f" /></svg>
              <span className="ml-[9px] w-[175px] overflow-hidden whitespace-nowrap pt-px underline decoration-1 underline-offset-2 [text-decoration-skip-ink:none]">images authcfg='31c651a' images</span>
            </div>
            <div className="flex h-[19px] shrink-0 items-center text-[#4a4a4a]">
              <Tri d="right" className="ml-[3px]" /><Check on className="ml-[11px]" /><span className="ml-[7px]"><CheckerI /></span><span className="ml-[7px] pt-px tracking-[0.35px] text-black">OpenStreetMap</span>
            </div>
            <div className="flex-1" />
            <div className="flex h-[14px] shrink-0 border-t border-[#b4b0ac] bg-[#e3e1de] text-[#4a4a4a]">
              <div className="flex w-[10px] items-center border-r border-[#b4b0ac] bg-[#f8f7f5]"><Tri d="left" w={8} h={4} /></div>
              <div className="w-[165px] border-r border-[#b4b0ac] bg-linear-to-b from-white to-[#f0eeec]" />
              <div className="flex-1" />
              <div className="flex w-[14px] items-center justify-center border-l border-[#b4b0ac] bg-[#f8f7f5]"><Tri d="right" w={8} h={4} /></div>
            </div>
          </div>
        </div>

        <div className="w-[6px] shrink-0" />
        <div className="h-[714px] w-[783px] shrink-0 border border-[#b4b0ac] bg-[#aad3df]">
          <svg className="h-[712px] w-[781px]" viewBox="243 127 781 712">
            {POINTS.flatMap(([y, ...xs]) => xs.map((x) => <circle key={x + "," + y} cx={x} cy={y} r="3.600" fill="#7d8b8f" stroke="#2f3a3d" strokeWidth="1.100" />))}
          </svg>
        </div>
        <div className="w-[9px] shrink-0" />

        {/* layer styling */}
        <div className="flex w-[494px] shrink-0 flex-col">
          <DockTitle t="Layer Styling" className="pr-[2px] pl-px" />
          <div className="mt-[2px] flex h-[25px] w-[491px] shrink-0 items-center rounded-[3px] border border-[#a9a5a0] bg-linear-to-b from-[#fbfaf9] to-[#efedea] pr-[6px] pl-[7px]">
            <svg className="mr-[4px] h-[14px] w-[13px]" viewBox="0 0 13 14" fill="none" stroke="#999"><circle cx="3.500" cy="4.500" r="1.100" /><circle cx="10" cy="1.800" r="1.100" /><circle cx="1.800" cy="11" r="1.100" /></svg>
            <span className="flex-1">images authcfg='31c651a' images</span><Tri w={8} h={4} className="text-[#4a4a4a]" />
          </div>
          <div className="flex">
            <div className="flex h-[664px] w-[38px] shrink-0 flex-col">
              <div className="flex h-[38px] shrink-0 items-center pt-[5px] pl-[6px]"><SymbologyI /></div>
              <div className="flex flex-1 flex-col bg-[#5b5b5b] pl-[4px]">
                <span className="mt-[4px] h-6"><ColorTagI /></span>
                <span className="mt-[10px] h-4 -ml-px"><HaloI /></span>
                <span className="mt-[15px] h-[22px]"><CubeI /></span>
                <span className="mt-[10px] h-6"><RulesI /></span>
                <span className="mt-[9px] h-6"><HistoryI /></span>
              </div>
            </div>

            <div className="relative ml-[3px] flex w-[450px] shrink-0 flex-col">
              <div className="flex h-9 items-center pb-px"><div className={BTN}><Tri d="left" w={14} h={10} className="text-[#4f80b8]" /></div><span className="pb-px pl-[9px]">Symbol size</span></div>
              <div className="h-5 pt-px pl-[2px] text-[13.500px] font-bold">Input</div>
              <div className="ml-px flex h-[110px] flex-col rounded-[2px] border border-[#d5d1cd] bg-[#ebe7e3] pt-[7px] pl-[10px]">
                <div className="flex h-[31px] items-center">
                  <span className="w-[88px]">Source</span>
                  <div className="flex h-[25px] w-[308px] rounded-t-[3px] border border-[#a9a5a0] bg-white"><div className="flex-1" /><div className="flex w-[20px] items-center justify-center border-l border-[#b4b0ac] bg-[#e0ddda] text-[#4a4a4a]"><Tri w={8} h={4} /></div></div>
                  <div className={BTN + " ml-[6px]"}><svg className="h-[13px] w-3" viewBox="0 0 12 13" fill="none"><EpsShape /></svg></div>
                </div>
                <div className="flex h-[31px] items-center">Values from</div>
                <div className="flex h-[31px] items-center"><span className="flex-1">to</span><div className={BTN + " mr-[11px] -translate-y-4"}><RefreshI className="h-[17px] w-[17px]" /></div></div>
              </div>
              <div className="flex h-[31px] items-center pl-1"><Tri d="right" w={12} h={7} className="text-[#333]" /><Check className="ml-[8px]" /><span className="pt-px pl-2 font-bold">Apply transform curve</span></div>
              <div className="h-[19px] pl-[2px] text-[13.500px] font-bold">Output</div>
              <div className="ml-px flex h-[195px] flex-col rounded-[2px] border border-[#d5d1cd] bg-[#ebe7e3] pt-[7px] pl-[10px]">
                <div className="flex h-[31px] items-center"><span className="w-[114px]">Size from</span><Spin v="" className="w-[312px]" /></div>
                <div className="flex h-[31px] items-center"><span className="w-[114px]">to</span><Spin v="" className="w-[312px]" /></div>
                <div className="flex h-[31px] items-center"><span className="w-[114px] whitespace-nowrap">Scale method</span><div className="flex h-[25px] w-[312px] items-center justify-end rounded-[3px] border border-[#a9a5a0] bg-linear-to-b from-[#fbfaf9] to-[#efedea] pr-[6px] text-[#4a4a4a]"><Tri w={8} h={4} /></div></div>
                <div className="flex h-[31px] items-center"><span className="w-[114px]">Exponent</span><Spin v="0,57" dim className="w-[312px]" /></div>
                <div className="flex h-[31px] items-center"><span className="w-[114px] whitespace-nowrap">Size when NULL</span><Spin v="0,000000" downDim className="w-[312px]" /></div>
              </div>
              <div className="mt-[6px] flex h-[216px] flex-col border border-[#b4b0ac] bg-white pt-px pl-[45px] leading-[22px]"><span>0</span><span>0</span></div>
              <div className="mt-[6px] flex h-[25px] items-center">
                <div className={BTN}><UndoI className={I16} c="#e07c3c" /></div><div className={BTN + " ml-[6px]"}><RedoI className={I16} c="#7bb890" /></div>
                <div className="flex-1" /><Check on /><span className="w-[97px] pl-[5px]">Live update</span>
                <div className="flex h-[25px] w-[80px] items-center justify-center rounded-[3px] border border-[#b0aca7] bg-linear-to-b from-white to-[#efedea]">
                  <svg className="h-4 w-[15px]" viewBox="0 0 15 16"><path d="M1 9l2.500-2L6 10l5-9.500 3 .5L7 15H5z" fill="#9ccc3c" stroke="#5c8a1e" strokeWidth=".8" /></svg><span className="pl-px tracking-[0.5px]">Apply</span>
                </div>
              </div>

              {/* field popup */}
              <div className="absolute top-[91px] left-[100px] flex h-[242px] w-[308px] border border-[#8d8984] bg-white shadow-[1px_1px_2px_#0004]">
                <div className="w-[292px]">
                  {FIELDS.map((f) => (
                    <div key={f} className={"flex h-6 items-center " + (f === "Sponge" ? "bg-[#308cc6] text-[#e3eef6]" : "")}>
                      <span className="w-[33px] pb-[3px] pl-[3px] font-semibold tracking-normal text-[#5a5a5a]">123</span><span>{f}</span>
                    </div>
                  ))}
                </div>
                <div className="flex flex-1 flex-col border-l border-[#b4b0ac] text-[#4a4a4a]">
                  <div className="flex h-[14px] items-center justify-center border-b border-[#b4b0ac]"><Tri d="up" w={8} h={4} /></div>
                  <div className="flex-1 bg-linear-to-r from-white to-[#f0eeec]" />
                  <div className="h-[20px] border-t border-[#b4b0ac] bg-[#e3e1de]" />
                  <div className="flex h-[14px] items-center justify-center border-t border-[#b4b0ac]"><Tri w={8} h={4} /></div>
                </div>
              </div>
              <svg className="absolute top-[173px] left-[326px] h-5 w-3" viewBox="0 0 12 20"><path d="M.700 1v15.500l3.600-3.400 2.500 5.600 2.500-1.200-2.500-5.300h4.600z" fill="#fff" stroke="#000" /></svg>
            </div>
          </div>
        </div>
      </div>

      {/* status bar */}
      <div className="flex h-[31px] shrink-0 items-center text-[12px] tracking-[-0.05px]">
        <div className="flex h-[25px] w-[267px] shrink-0 items-center rounded-r-[3px] border border-l-0 border-[#a9a5a0] bg-white pl-[7px] text-[14px] tracking-[0.55px] text-[#8a8a8a]">
          <svg className="mr-[7px] h-[14px] w-[14px]" viewBox="0 0 14 14" fill="none" stroke="#888" strokeWidth="1.200"><circle cx="5.500" cy="5.500" r="4.200" /><path d="M8.500 8.500l4 4" /></svg>Type to locate (Ctrl+K)
        </div>
        <span className="w-[347px] pl-2">Getting tiles.</span>
        <span className="w-16">Coordinate</span>
        <div className="flex h-[23px] w-[138px] items-center justify-center rounded-[3px] border border-[#a9a5a0] bg-white text-[11.500px] tracking-[0.1px]">-88.459047,-7.072167</div>
        <svg className="ml-[4px] h-4 w-4" viewBox="0 0 16 16" fill="none" stroke="#333"><path d="M2 1l12 11M5 2c-3 1-4 3-3 5l5 6c3 1 5-1 7-3M4 6l5 5M7 1l-1 3" strokeWidth="1.300" /><circle cx="11" cy="5" r="3" fill="#666" /><circle cx="7" cy="8" r="2.300" fill="#ddd" /></svg>
        <span className="ml-[13px] w-8">Scale</span>
        <div className="flex h-[25px] w-[97px] items-center rounded-[3px] border border-[#a9a5a0] bg-white pl-1"><span className="flex-1 tracking-[-0.25px]">1:3280</span><div className="flex h-full w-[19px] items-center justify-center border-l border-[#b4b0ac] bg-[#f7f5f3] text-[#4a4a4a]"><Tri w={8} h={4} /></div></div>
        <svg className="ml-[12px] h-[14px] w-3" viewBox="0 0 12 14" fill="none"><path d="M3 7V4a3 3 0 0 1 6 0v3" stroke="#555" strokeWidth="1.600" /><rect x="0" y="6" width="12" height="8" rx="1" fill="#5a5a5a" /><path d="M1 8h10M1 10h10M1 12h10" stroke="#888" strokeWidth=".6" /></svg>
        <span className="ml-[9px] w-[56px]">Magnifier</span><Spin v="100%" className="w-[98px]" />
        <span className="ml-[9px] w-[57px]">Rotation</span><Spin v="0,0 °" className="w-[94px]" />
        <Check on className="ml-[6px]" /><span className="ml-[5px] w-[58px]">Render</span>
        <GlobeI className="h-[14px] w-[14px]" c="#b4b2b0" l="#777" /><span className="ml-[5px] w-[78px] tracking-[-0.2px]">EPSG:4326</span>
        <svg className="h-4 w-4" viewBox="0 0 16 16"><path d="M8 1.500c4 0 7.500 2 7.500 5.500 0 2-1 3.300-2 4l1 4-4-2.700c-5 1-10-1-10-5.300 0-3.500 3.500-5.500 7.500-5.500z" fill="#5b5b5b" /><path d="M3.500 6h2v2h-2zM7 6h2v2H7zM10.500 6h2v2h-2z" fill="#efebe7" /></svg>
      </div>
    </div>
  );
}
